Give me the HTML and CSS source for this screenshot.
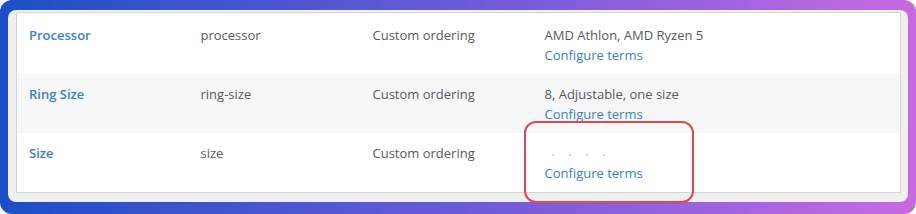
FILE: index.html
```html
<!DOCTYPE html>
<html lang="en">
<head>
  <meta charset="UTF-8">
  <meta name="viewport" content="width=device-width, initial-scale=1.0">
  <title>Attributes</title>
  <link rel="stylesheet" href="styles.css">
</head>
<body>
  <div class="frame">
    <div class="panel">
      <!-- 属性列表 -->
      <table class="attrs">
        <tbody>
          <tr class="first">
            <td class="name"><a href="#">Processor</a></td>
            <td>processor</td>
            <td>Custom ordering</td>
            <td class="terms">AMD Athlon, AMD Ryzen 5<br><a href="#">Configure terms</a></td>
          </tr>
          <tr class="alt">
            <td class="name"><a href="#">Ring Size</a></td>
            <td>ring-size</td>
            <td>Custom ordering</td>
            <td class="terms">8, Adjustable, one size<br><a href="#">Configure terms</a></td>
          </tr>
          <tr>
            <td class="name"><a href="#">Size</a></td>
            <td>size</td>
            <td>Custom ordering</td>
            <td class="terms">
              <span class="blank"><i></i><i></i><i></i><i></i></span><br><a href="#">Configure terms</a>
              <!-- 红框标注 -->
              <span class="mark"></span>
            </td>
          </tr>
        </tbody>
      </table>
    </div>
  </div>
</body>
</html>
```
FILE: styles.css
```css
*{
  margin: 0;
  padding: 0;
  box-sizing: border-box;
}
body{
  width: 916px;
  height: 214px;
  background: #fff;
  font-family: "Open Sans", "Noto Sans", sans-serif;
  font-size: 13px;
  color: #555a61;
}
a{
  color: #3d80c1;
  text-decoration: none;
}
.frame{
  width: 916px;
  height: 214px;
  padding: 10px 8px 12px 8px;
  border-radius: 12px;
  background: linear-gradient(90deg, #1b4fc7 0%, #6a5ad8 50%, #c86ae2 100%);
}
.panel{
  height: 100%;
  padding: 2px 7px 10px 8px;
  background: #f0f0f1;
  border-radius: 8px;
}
.attrs{
  width: 100%;
  border-collapse: collapse;
  border: 1px solid #d4d5d8;
  background: #fff;
  table-layout: fixed;
}
.attrs td{
  width: 172px;
  height: 59px;
  padding: 10px 12px 9px 12px;
  line-height: 20px;
  vertical-align: top;
}
.attrs tr.first td{
  padding-top: 12px;
  height: 60px;
}
.attrs td.terms{
  width: auto;
  position: relative;
}
.attrs tr.alt td{
  background: #f6f7f7;
}
.name a{
  font-weight: 600;
}
.blank{
  display: inline-flex;
  gap: 15px;
  padding-left: 7px;
  vertical-align: middle;
}
.blank i{
  width: 2px;
  height: 2px;
  border-radius: 1px;
  background: #c9cbce;
}
.mark{
  position: absolute;
  left: -9px;
  top: -12px;
  width: 170px;
  height: 82px;
  border: 2px solid #e0484c;
  border-radius: 12px;
}
```
